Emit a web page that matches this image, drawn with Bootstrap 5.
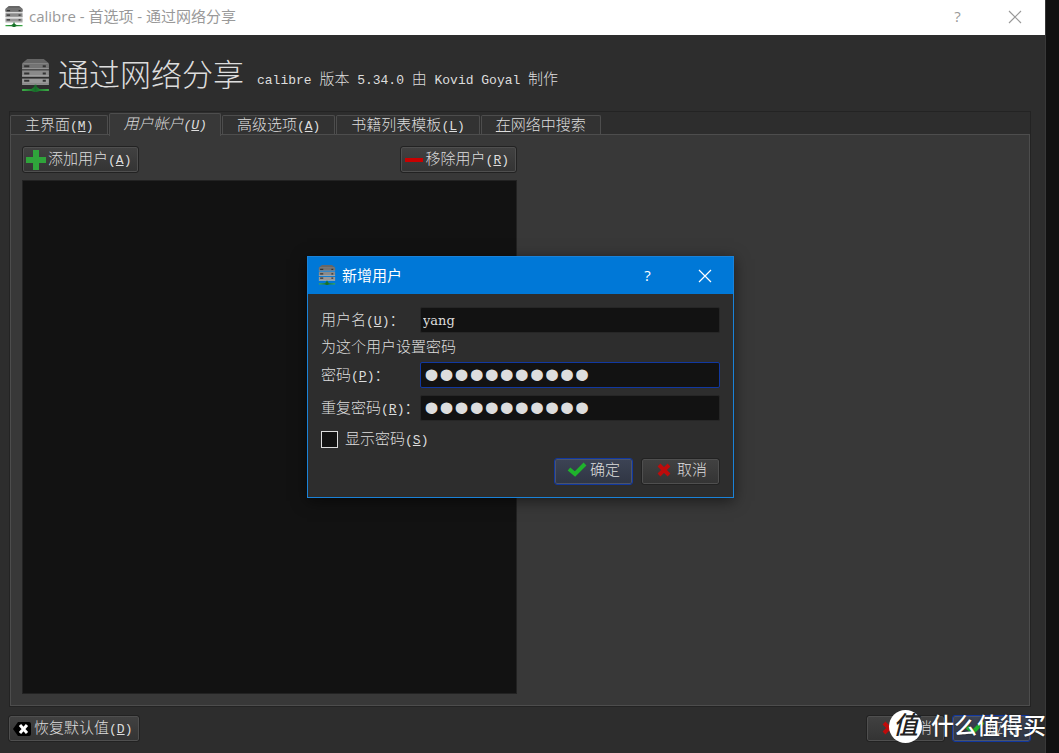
<!DOCTYPE html>
<html lang="zh-CN">
<head>
<meta charset="utf-8">
<meta name="viewport" content="width=device-width, initial-scale=1">
<title>calibre - 首选项 - 通过网络分享</title>
<link href="https://cdn.jsdelivr.net/npm/bootstrap@5.3.0/dist/css/bootstrap.min.css" rel="stylesheet">
<style>
  body { background: #111; color: #ddd; font-family: "DejaVu Sans", "Noto Sans CJK SC", sans-serif; font-size: 15px; line-height: 20px; font-weight: 300; }
  .app { background: #2d2d2d; border-right: 1px solid #383838; margin-right: 13px; }
  .titlebar { background: #fff; color: #999; height: 35px; font-family: "Open Sans", "Noto Sans CJK SC", sans-serif; font-weight: 400; padding: 0 2px 3px 5px; gap: 6px; }
  .win-btn { background: none; border: 0; color: inherit; padding: 0; width: 57px; height: 32px; line-height: 1; }
  .titlebar .win-btn + .win-btn { margin-left: -6px; }
  .app-head { height: 76px; padding: 4px 22px 0; gap: 9px; }
  .app-head h1 { font-size: 31px; line-height: 40px; font-weight: 300; margin: 0; }
  .version { margin: 9px 0 0 1px; }
  .version .latin { margin: 0 3px; }
  .latin { font-family: "Liberation Mono", monospace; font-size: 13px; font-weight: 400; }
  .tab-frame { border: 1px solid #232323; margin: 0 14px 0 9px; }
  .tabs { height: 22px; gap: 1px; position: relative; z-index: 1; }
  .tabs .nav-link { color: inherit; border: 1px solid #4d4d4d; border-bottom: 0; border-radius: 2px 2px 0 0; background: #323232; padding: 0 14px; height: 19px; line-height: 18px; }
  .tabs .nav-link.active { background: #383838; height: 23px; margin-bottom: -2px; line-height: 21px; font-style: italic; padding: 0 13px; }
  .pane { background: #383838; border: 1px solid #4d4d4d; padding: 11px; gap: 6px; }
  .user-list { background: #121212; border: 1px solid #222; margin-top: 7px; min-height: 200px; }
  .tool { height: 25px; margin: 1px; padding: 0 6px 0 2px; border: 1px solid #4f4f4f; outline: 1px solid #222; border-radius: 2px; background: linear-gradient(#414141, #343434); color: #ddd; display: inline-flex; align-items: center; gap: 2px; white-space: nowrap; line-height: 20px; font-weight: 300; }
  .tool-wide { width: 77px; justify-content: center; padding: 0 0 2px; gap: 3px; }
  .tool-main { background: linear-gradient(#3c4354, #303644); outline-color: #1138a0; border-color: #4c5468; }
  .app-foot { padding: 8px 14px 11px 8px; gap: 7px; }
  .overlay { inset: 0 4px 0 0; }
  .dialog { width: 427px; background: #2d2d2d; border: 1px solid #1a82d8; box-shadow: 0 3px 14px #0008; }
  .dialog-bar { background: #0078d7; color: #fff; height: 37px; padding-left: 10px; font-family: "Open Sans", "Noto Sans CJK SC", sans-serif; font-weight: 400; gap: 6px; }
  .dialog-bar .win-btn + .win-btn { margin-left: -6px; }
  .dialog form { padding: 13px 13px 12px; }
  .dialog form .form-label { width: 99px; margin: 0; padding-top: 3px; white-space: nowrap; }
  .field { flex: 1; min-width: 0; height: 26px; background: #121212; border: 1px solid #262626; border-radius: 2px; color: #ddd; padding: 2px 2px 0; font: 13px "DejaVu Serif", serif; }
  .field-pass { font: 43px "Liberation Sans", sans-serif; line-height: 24px; padding: 0 3px; }
  .field:focus { outline: 0; }
  .field-on { border-color: #1138a0; }
  .note { height: 29px; line-height: 29px; margin: 0; }
  .again { margin-top: 7px; }
  .show-row { padding: 8px 0 7px; gap: 7px; }
  .tick { appearance: none; width: 17px; height: 17px; border: 1px solid #ddd; background: #121212; margin: 0; }
  .watermark { right: 13px; bottom: 10px; color: #fff; gap: 9px; font-size: 23px; line-height: 34px; font-weight: 500; text-shadow: 0 0 2px #0008; pointer-events: none; }
  .watermark .seal { width: 33px; height: 33px; border-radius: 50%; background: #fff; color: #222; text-align: center; font-size: 25px; line-height: 31px; font-style: italic; text-shadow: none; }
</style>
</head>
<body>
<svg width="0" height="0" class="position-absolute" aria-hidden="true">
  <defs>
    <linearGradient id="leaf" x1="0" y1="0" x2="1" y2="0"><stop offset="0" stop-color="#3fae49"/><stop offset=".5" stop-color="#156c28"/><stop offset="1" stop-color="#3fae49"/></linearGradient>
    <symbol id="server" viewBox="0 0 26 32">
      <path d="M0 8V4L5 0H21L26 4V8Z" fill="#666"/><path d="M1 4H25V5H1Z" fill="#888"/>
      <path d="M0 5H26V9H0Z" fill="#747474"/><path d="M0 11H26V17H0Z" fill="#8a8a8a"/><path d="M0 19H26V24H0Z" fill="#999"/>
      <path d="M0 9H26V10H0ZM0 16H26V17H0ZM0 24H26V25H0Z" fill="#b0b0b0"/>
      <path d="M2 6H7V8H2ZM2 13H7V15H2ZM2 20H7V22H2ZM20 6H23V8H20ZM20 13H23V15H20ZM20 20H23V22H20Z" fill="#333"/>
      <path d="M0 29H9L12 27V25H14V27L17 29H26V31H17L14 32H12L9 31H0Z" fill="url(#leaf)"/>
    </symbol>
    <symbol id="check" viewBox="0 0 20 16"><path d="M2 7L8 12L18 2" fill="none" stroke="#1fb32c" stroke-width="4"/></symbol>
    <symbol id="cross" viewBox="0 0 14 14"><path d="M2 2L12 12M12 2L2 12" stroke="#be0b0b" stroke-width="4"/></symbol>
    <symbol id="close" viewBox="0 0 14 14"><path d="M1 1L13 13M13 1L1 13" stroke="currentColor" stroke-width="1.2"/></symbol>
  </defs>
</svg>

<div class="app min-vh-100 d-flex flex-column position-relative">
  <header class="titlebar d-flex align-items-center">
    <svg width="18" height="21"><use href="#server"/></svg>
    <span>calibre - 首选项 - 通过网络分享</span>
    <button class="win-btn ms-auto" type="button">?</button>
    <button class="win-btn" type="button" aria-label="关闭"><svg width="14" height="14"><use href="#close"/></svg></button>
  </header>

  <div class="app-head d-flex align-items-center">
    <svg width="27" height="33"><use href="#server"/></svg>
    <h1>通过网络分享</h1>
    <p class="version"><span class="latin">calibre</span> 版本 <span class="latin">5.34.0</span> 由 <span class="latin">Kovid Goyal</span> 制作</p>
  </div>

  <main class="tab-frame flex-grow-1 d-flex flex-column">
    <nav class="nav tabs flex-nowrap align-items-end text-nowrap">
      <a class="nav-link" href="#">主界面<span class="latin">(<u>M</u>)</span></a>
      <a class="nav-link active" href="#" aria-current="page">用户帐户<span class="latin">(<u>U</u>)</span></a>
      <a class="nav-link" href="#">高级选项<span class="latin">(<u>A</u>)</span></a>
      <a class="nav-link" href="#">书籍列表模板<span class="latin">(<u>L</u>)</span></a>
      <a class="nav-link" href="#"><u>在</u>网络中搜索</a>
    </nav>
    <div class="pane flex-grow-1 d-flex">
      <section class="w-50 d-flex flex-column">
        <div class="d-flex justify-content-between">
          <button class="tool" type="button"><svg width="20" height="20" viewBox="0 0 20 20"><path d="M7 0H13V7H20V13H13V20H7V13H0V7H7Z" fill="#2fa43b"/></svg><span>添加用户<span class="latin">(<u>A</u>)</span></span></button>
          <button class="tool" type="button"><svg width="20" height="20" viewBox="0 0 20 20"><path d="M1 8H19V12H1Z" fill="#c80000"/></svg><span>移除用户<span class="latin">(<u>R</u>)</span></span></button>
        </div>
        <div class="user-list flex-grow-1"></div>
      </section>
      <section class="w-50"></section>
    </div>
  </main>

  <footer class="app-foot d-flex">
    <button class="tool" type="button"><svg width="20" height="14" viewBox="-1 0 20 14"><path d="M5 0H16Q18 0 18 2V12Q18 14 16 14H5L0 7Z" fill="#000"/><path d="M7 3L14 11M14 3L7 11" stroke="#fff" stroke-width="3"/></svg><span>恢复默认值<span class="latin">(<u>D</u>)</span></span></button>
    <button class="tool tool-wide ms-auto" type="button"><svg width="20" height="14"><use href="#cross"/></svg>取消</button>
    <button class="tool tool-wide tool-main" type="button"><svg width="20" height="16"><use href="#check"/></svg>应用</button>
  </footer>

  <div class="overlay position-absolute d-flex align-items-center justify-content-center">
    <div class="dialog" role="dialog" aria-labelledby="dlg-title">
      <div class="dialog-bar d-flex align-items-center">
        <svg width="18" height="20"><use href="#server"/></svg>
        <span id="dlg-title">新增用户</span>
        <button class="win-btn ms-auto" type="button">?</button>
        <button class="win-btn" type="button" aria-label="关闭"><svg width="14" height="14"><use href="#close"/></svg></button>
      </div>
      <form>
        <div class="d-flex align-items-center">
          <label class="form-label" for="user">用户名<span class="latin">(<u>U</u>)</span>：</label>
          <input class="field" id="user" type="text" value="yang">
        </div>
        <p class="note">为这个用户设置密码</p>
        <div class="d-flex align-items-center">
          <label class="form-label" for="pass">密码<span class="latin">(<u>P</u>)</span>：</label>
          <input class="field field-pass field-on" id="pass" type="password" value="abcdefghijk">
        </div>
        <div class="again d-flex align-items-center">
          <label class="form-label" for="again">重复密码<span class="latin">(<u>R</u>)</span>：</label>
          <input class="field field-pass" id="again" type="password" value="abcdefghijk">
        </div>
        <div class="show-row d-flex align-items-center">
          <input class="tick" id="show" type="checkbox">
          <label for="show">显示密码<span class="latin">(<u>S</u>)</span></label>
        </div>
        <div class="d-flex justify-content-end gap-2">
          <button class="tool tool-wide tool-main" type="button"><svg width="20" height="16"><use href="#check"/></svg>确定</button>
          <button class="tool tool-wide" type="button"><svg width="20" height="14"><use href="#cross"/></svg>取消</button>
        </div>
      </form>
    </div>
  </div>
</div>

<div class="watermark position-absolute d-flex align-items-center"><span class="seal">值</span><span>什么值得买</span></div>
<script src="https://cdn.jsdelivr.net/npm/bootstrap@5.3.0/dist/js/bootstrap.bundle.min.js"></script>
</body>
</html>
